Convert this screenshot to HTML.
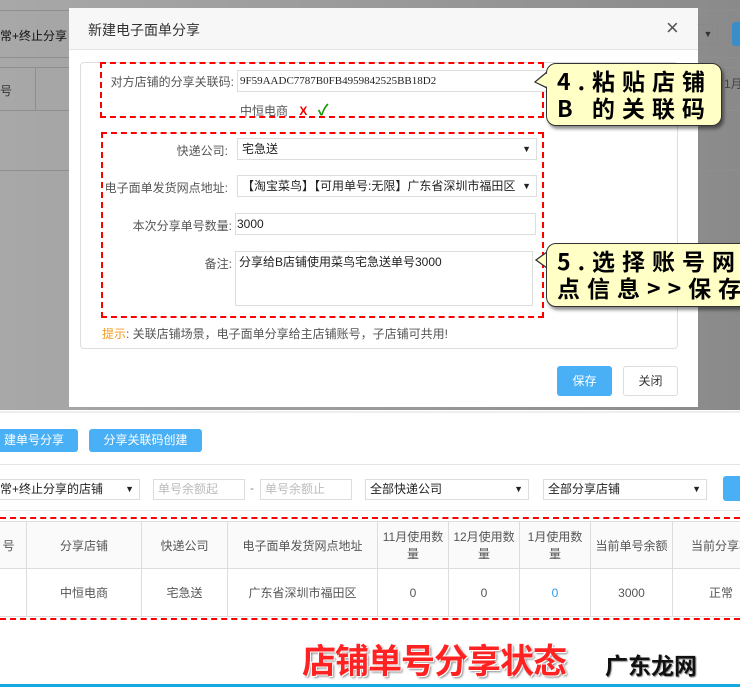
<!DOCTYPE html>
<html><head><meta charset="utf-8"><style>
*{box-sizing:border-box;margin:0;padding:0}
body{width:740px;height:693px;overflow:hidden;position:relative;background:#fff;font-family:"Liberation Sans","Noto Sans CJK SC",sans-serif;font-size:12px;color:#333}
.a{position:absolute;white-space:nowrap}
.ov{left:0;top:0;width:740px;height:410px;background:linear-gradient(90deg,#a8a8a8,#9a9a9a 50%,#8a8a8a)}
.hl{height:1px;background:#8e8e8e;left:0;width:740px}
.modal{left:69px;top:8px;width:629px;height:399px;background:#fff}
.mh{left:0;top:0;width:629px;height:42px;background:#f7f7f7;border-bottom:1px solid #e5e5e5}
.box{border:1px solid #ddd;border-radius:4px}
.inp{border:1px solid #ddd;background:#fff;height:22px;line-height:20px;padding-left:4px;font-size:12px;color:#222}
.lbl{text-align:right;color:#555;font-size:12px}
.red{border:2px dashed #f00}
.sel:after{content:"▼";position:absolute;right:5px;top:0;font-size:9px;color:#222}
.btn{border-radius:3px;text-align:center;color:#fff;background:#4ab0f5}
.call{background:#ffffc6;border:1.5px solid #333;border-radius:10px;box-shadow:2px 3px 3px rgba(0,0,0,.45);font-family:"Noto Sans CJK SC",sans-serif;font-weight:bold;font-size:23px;letter-spacing:7px;line-height:27px;color:#000;padding:3px 0 0 10px}
td,th{border:1px solid #ddd;text-align:center;font-weight:normal;color:#555;font-size:12px;padding:0 3px}
</style></head><body>
<div class="a ov"></div>
<div class="a hl" style="top:10px"></div>
<div class="a hl" style="top:57px"></div>
<div class="a hl" style="top:67px"></div>
<div class="a hl" style="top:110px"></div>
<div class="a hl" style="top:170px"></div>
<div class="a" style="left:35px;top:67px;width:1px;height:43px;background:#8e8e8e"></div>
<div class="a" style="left:0;top:27px;font-size:12px;color:#111">常+终止分享</div>
<div class="a" style="left:0;top:82px;color:#333">号</div>
<div class="a" style="left:698px;top:24px;width:20px;height:21px;border:1px solid #888;font-size:9px;line-height:19px;text-align:center">▼</div>
<div class="a" style="left:732px;top:22px;width:10px;height:24px;background:#3a8dc8;border-radius:3px"></div>
<div class="a" style="left:724px;top:75px;color:#444">1月</div>

<div class="a modal">
 <div class="a mh"><div class="a" style="left:19px;top:12px;font-size:14px;color:#333">新建电子面单分享</div><div class="a" style="left:597px;top:7px;font-size:22px;color:#555">×</div></div>
 <div class="a box" style="left:11px;top:54px;width:598px;height:287px"></div>
</div>
<div class="a red" style="left:100px;top:62px;width:444px;height:56px"></div>
<div class="a red" style="left:101px;top:132px;width:443px;height:186px"></div>
<div class="a lbl" style="left:100px;top:73px;width:134px">对方店铺的分享关联码:</div>
<div class="a inp" style="left:237px;top:70px;width:310px;font-family:'Liberation Serif',serif;font-size:11px;padding-left:2px">9F59AADC7787B0FB4959842525BB18D2</div>
<div class="a" style="left:240px;top:99px;color:#555">中恒电商 <span style="color:#e00;font-weight:bold;margin-left:8px">X</span> <span style="color:#190;font-weight:bold;font-size:15px;margin-left:7px">✓</span></div>
<div class="a lbl" style="left:100px;top:142px;width:128px">快递公司:</div>
<div class="a inp sel" style="left:237px;top:138px;width:300px">宅急送</div>
<div class="a lbl" style="left:100px;top:179px;width:128px">电子面单发货网点地址:</div>
<div class="a inp sel" style="left:237px;top:175px;width:300px;overflow:hidden">【淘宝菜鸟】【可用单号:无限】广东省深圳市福田区</div>
<div class="a lbl" style="left:100px;top:217px;width:132px">本次分享单号数量:</div>
<div class="a inp" style="left:235px;top:213px;width:301px;padding-left:1px">3000</div>
<div class="a lbl" style="left:100px;top:255px;width:132px">备注:</div>
<div class="a inp" style="left:235px;top:251px;width:298px;height:55px;padding-left:3px">分享给B店铺使用菜鸟宅急送单号3000</div>
<div class="a" style="left:102px;top:325px;color:#555"><span style="color:#f39a1e">提示</span>: 关联店铺场景，电子面单分享给主店铺账号，子店铺可共用!</div>
<div class="a btn" style="left:557px;top:366px;width:55px;height:30px;line-height:30px">保存</div>
<div class="a" style="left:623px;top:366px;width:55px;height:30px;line-height:28px;border:1px solid #ddd;border-radius:3px;text-align:center;color:#333;background:#fff">关闭</div>

<svg class="a" style="left:530px;top:60px" width="30" height="40"><polygon points="17,12 5,22 17,28" fill="#ffffc6" stroke="#333" stroke-width="1.3"/></svg>
<div class="a call" style="left:546px;top:63px;width:176px;height:63px">4.粘贴店铺<br>B 的关联码</div>
<svg class="a" style="left:530px;top:242px" width="30" height="40"><polygon points="17,10 6,18 17,26" fill="#ffffc6" stroke="#333" stroke-width="1.3"/></svg>
<div class="a call" style="left:546px;top:243px;width:210px;height:64px">5.选择账号网<br>点信息&gt;&gt;保存</div>
<svg class="a" style="left:530px;top:60px" width="30" height="70"><polygon points="17.5,13 6,22 17.5,27" fill="#ffffc6"/></svg>

<div class="a" style="left:0;top:411px;width:740px;height:2px;background:#eee"></div>
<div class="a btn" style="left:-10px;top:429px;width:88px;height:23px;line-height:23px">建单号分享</div>
<div class="a btn" style="left:89px;top:429px;width:113px;height:23px;line-height:23px">分享关联码创建</div>
<div class="a" style="left:0;top:464px;width:740px;height:1px;background:#e5e5e5"></div>
<div class="a inp sel" style="left:-5px;top:479px;width:145px;height:21px;line-height:19px">常+终止分享的店铺</div>
<div class="a inp" style="left:153px;top:479px;width:92px;height:21px;line-height:19px;color:#bbb">单号余额起</div>
<div class="a" style="left:250px;top:481px;color:#888">-</div>
<div class="a inp" style="left:260px;top:479px;width:92px;height:21px;line-height:19px;color:#bbb">单号余额止</div>
<div class="a inp sel" style="left:365px;top:479px;width:164px;height:21px;line-height:19px">全部快递公司</div>
<div class="a inp sel" style="left:543px;top:479px;width:164px;height:21px;line-height:19px">全部分享店铺</div>
<div class="a" style="left:723px;top:476px;width:20px;height:25px;background:#4ab0f5;border-radius:3px"></div>
<div class="a" style="left:0;top:510px;width:740px;height:1px;background:#e5e5e5"></div>
<div class="a" style="left:0;top:517px;width:740px;border-top:2px dashed #f00"></div>
<div class="a" style="left:0;top:618px;width:740px;border-top:2px dashed #f00"></div>
<table class="a" style="left:-10px;top:521px;border-collapse:collapse;table-layout:fixed;width:780px;white-space:normal">
<tr style="height:47px;background:#fafafa"><th style="width:36px">号</th><th style="width:115px">分享店铺</th><th style="width:86px">快递公司</th><th style="width:150px">电子面单发货网点地址</th><th style="width:71px">11月使用数量</th><th style="width:71px">12月使用数量</th><th style="width:71px">1月使用数量</th><th style="width:82px">当前单号余额</th><th style="white-space:nowrap">当前分享状</th></tr>
<tr style="height:48px"><td></td><td>中恒电商</td><td>宅急送</td><td>广东省深圳市福田区</td><td>0</td><td>0</td><td style="color:#2a9ce8">0</td><td>3000</td><td>正常</td></tr>
</table>
<div class="a" style="left:302px;top:634px;font-family:'Noto Sans CJK SC',sans-serif;font-weight:bold;font-size:34px;color:#f22;letter-spacing:-1px;text-shadow:-1px -1px 0 #fff,1px 1px 0 #fff,2px 2px 2px #888">店铺单号分享状态</div>
<div class="a" style="left:605px;top:647px;font-family:'Noto Sans CJK SC',sans-serif;font-weight:bold;font-size:23px;color:#111;text-shadow:1px 1px 1px #888">广东龙网</div>
<div class="a" style="left:0;top:684px;width:740px;height:3px;background:#18a8e0"></div>
</body></html>
